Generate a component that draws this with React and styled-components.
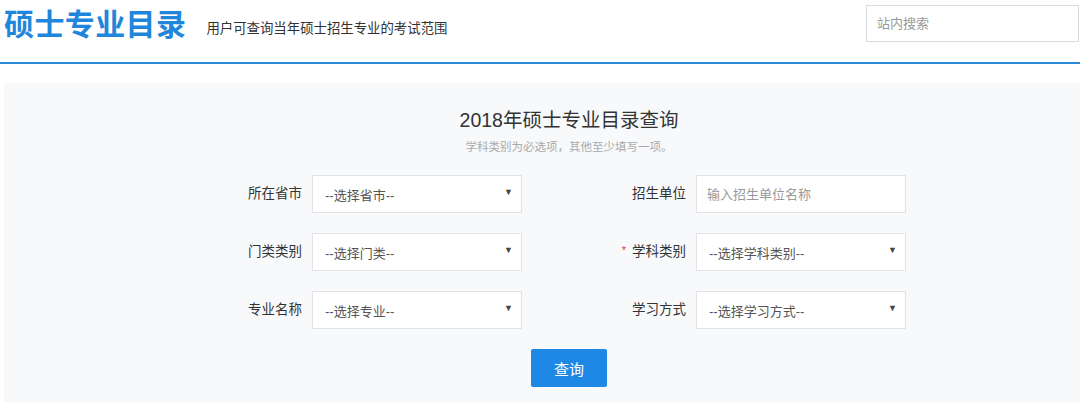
import styled, { createGlobalStyle } from 'styled-components'

const GlobalStyle = createGlobalStyle`
  html, body {
    margin: 0;
    padding: 0;
    background: #fff;
    overflow: hidden;
  }
  body {
    font-family: "Liberation Sans", "Noto Sans CJK SC", sans-serif;
    color: #333;
  }
  * { box-sizing: border-box; }
`

const Page = styled.div`
  width: 100%;
`

const Header = styled.header`
  height: 64px;
  border-bottom: 2px solid #2b87d8;
  display: flex;
  align-items: flex-start;
  padding: 0 0 0 4px;
`

const Brand = styled.h1`
  margin: 6px 0 0;
  font-size: 30px;
  line-height: 38px;
  font-weight: 700;
  color: #1f86dc;
  letter-spacing: 0.4px;
`

const Slogan = styled.p`
  margin: 20px 0 0 20px;
  font-size: 13.4px;
  line-height: 18px;
  color: #333;
`

const Search = styled.input`
  margin: 5px 1px 0 auto;
  width: 213px;
  height: 37px;
  border: 1px solid #dcdcdc;
  padding: 0 10px;
  font-family: inherit;
  font-size: 13px;
  outline: none;
  &::placeholder { color: #999; }
`

const Panel = styled.section`
  margin: 19px 0 0 4px;
  background: #f8f9fb;
  padding: 20px 0 16px 54px;
`

const Title = styled.h2`
  margin: 0;
  text-align: center;
  font-size: 19.5px;
  line-height: 34px;
  font-weight: 400;
  color: #333;
`

const Hint = styled.p`
  margin: 1px 0 0;
  text-align: center;
  font-size: 11.5px;
  line-height: 18px;
  color: #aaa;
`

const FormGrid = styled.div`
  margin: 19px 0 0 164px;
  display: grid;
  grid-template-columns: 300px 300px;
  column-gap: 84px;
  row-gap: 20px;
`

const Field = styled.div`
  display: flex;
  align-items: center;
  height: 38px;
`

const Label = styled.label`
  width: 90px;
  padding-right: 10px;
  text-align: right;
  font-size: 13.5px;
  color: #333;
  margin-top: -4px;
`

const Star = styled.span`
  color: #e04040;
  font-size: 11px;
  margin-right: 6px;
  position: relative;
  top: -2px;
`

const SelectBox = styled.div`
  width: 210px;
  height: 38px;
  background: #fff;
  border: 1px solid #e1e3e6;
  display: flex;
  align-items: center;
  justify-content: space-between;
  padding: 0 8px 0 12px;
  font-size: 13px;
  color: #555;
`

const Arrow = styled.span`
  font-size: 9px;
  color: #444;
  margin-top: -4px;
`

const TextInput = styled.input`
  width: 210px;
  height: 38px;
  background: #fff;
  border: 1px solid #e1e3e6;
  padding: 0 10px;
  font-family: inherit;
  font-size: 13px;
  outline: none;
  &::placeholder { color: #999; }
`

const Actions = styled.div`
  display: flex;
  justify-content: center;
  margin-top: 20px;
`

const Button = styled.button`
  width: 76px;
  height: 38px;
  border: none;
  border-radius: 2px;
  background: #1e88e5;
  color: #fff;
  font-family: inherit;
  font-size: 15px;
`

const Select = ({ text }) => (
  <SelectBox>
    <span>{text}</span>
    <Arrow>▼</Arrow>
  </SelectBox>
)

const App = () => {
  return (
    <Page>
      <GlobalStyle />
      <Header>
        <Brand>硕士专业目录</Brand>
        <Slogan>用户可查询当年硕士招生专业的考试范围</Slogan>
        <Search placeholder="站内搜索" />
      </Header>

      <Panel>
        <Title>2018年硕士专业目录查询</Title>
        <Hint>学科类别为必选项，其他至少填写一项。</Hint>

        <FormGrid>
          <Field>
            <Label>所在省市</Label>
            <Select text="--选择省市--" />
          </Field>
          <Field>
            <Label>招生单位</Label>
            <TextInput placeholder="输入招生单位名称" />
          </Field>
          <Field>
            <Label>门类类别</Label>
            <Select text="--选择门类--" />
          </Field>
          <Field>
            <Label><Star>*</Star>学科类别</Label>
            <Select text="--选择学科类别--" />
          </Field>
          <Field>
            <Label>专业名称</Label>
            <Select text="--选择专业--" />
          </Field>
          <Field>
            <Label>学习方式</Label>
            <Select text="--选择学习方式--" />
          </Field>
        </FormGrid>

        <Actions>
          <Button>查询</Button>
        </Actions>
      </Panel>
    </Page>
  )
}

export default App
